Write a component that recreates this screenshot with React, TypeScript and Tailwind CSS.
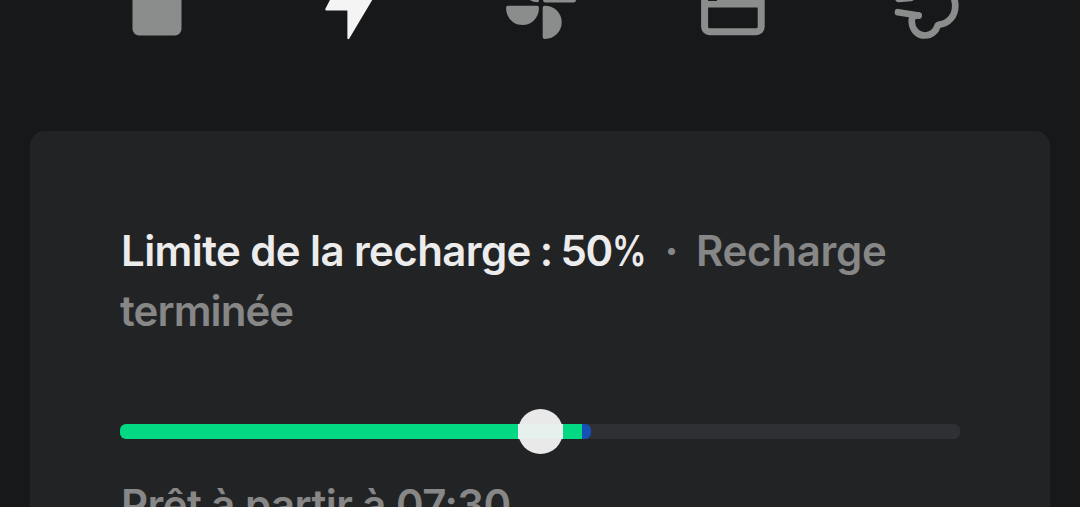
import React from 'react';

const LIMIT = 50;
const CHARGE = 55;

function LockIcon() {
  return <svg width="80" height="50" viewBox="-40 0 80 50" className="text-[#8b8d8c]">
      <rect x="-24.5" y="-12" width="49" height="47.5" rx="6.5" fill="currentColor" />
    </svg>;
}

function BoltIcon() {
  return <svg width="80" height="50" viewBox="-40 0 80 50" className="text-[#f4f4f4]">
      <path d="M-17.5 -3L-23.6 8.8Q-24 10.5 -22.6 10.5H-1.6V38.4Q-1 39.8 0.3 38.6L25 -3Z" fill="currentColor" />
    </svg>;
}

function FanIcon() {
  return <svg width="80" height="50" viewBox="-40 0 80 50" className="text-[#8b8d8c]">
      <g fill="currentColor">
        <path d="M-33 5.7H-4Q-2 5.7 -2 7.7C-2 17.5 -9 25 -18.5 25S-35 17.5 -35 7.7Q-35 5.7 -33 5.7Z" />
        <path d="M1.7 7.7Q1.7 5.7 3.7 5.7C13.5 5.7 20.7 13 20.7 22.3S13.5 39 3.7 39Q1.7 39 1.7 37Z" />
        <path d="M-15 -3Q-10 2.2 -3.5 2.2Q-2 2.2 -2 0V-3Z" />
        <path d="M2 -3V0Q2 2.4 4 2.4H33Q35 2.4 35 0V-3Z" />
      </g>
    </svg>;
}

function TrunkIcon() {
  return <svg width="80" height="50" viewBox="-40 0 80 50" className="text-[#8b8d8c]">
      <rect x="-28.4" y="-18" width="56.6" height="49.8" rx="5" fill="none" stroke="currentColor" strokeWidth="7" />
      <path d="M-28 4.2H28" stroke="currentColor" strokeWidth="6.6" />
      <path d="M-16 -4H28V2H-16Z" fill="currentColor" />
    </svg>;
}

function AirIcon() {
  return <svg width="80" height="50" viewBox="-40 0 80 50" className="text-[#8b8d8c]">
      <g fill="none" stroke="currentColor" strokeWidth="6.7" strokeLinecap="round" strokeLinejoin="round">
        <path d="M-26.5 -1.2L-14 -2.2" />
        <path d="M-27 12.2L-6.5 15.5" />
        <path d="M-6.5 15.5C-12.5 14.5 -13.5 19 -13.2 22C-13 29 -8 35.5 0 35.5C6.5 35.5 11 31 12.3 26.5Q12.8 24.8 14.5 24.6C23.5 23.6 30.3 16 30.3 6C30.3 2 29.5 -1 28 -4" />
      </g>
    </svg>;
}

function ChargeSlider() {
  return <div className="relative mt-[83px] h-[15px] rounded-[6px] bg-[#2f3034]">
      <div className="flex h-full overflow-hidden rounded-[6px]" style={{ width: `${CHARGE + 1.1}%` }}>
        <div className="h-full flex-1 bg-[#03d983]" />
        <div className="h-full w-[9px] bg-[#1450b5]" />
      </div>
      <div className="absolute -top-[15px] -ml-[22px] size-[45px] rounded-full bg-[#e9e9e9]" style={{ left: `${LIMIT}%` }}>
        <div className="mt-[15px] h-[15px] bg-[#e6f0ec]" />
      </div>
    </div>;
}

export default function App() {
  return <div className="flex h-[507px] w-[1080px] flex-col overflow-hidden bg-[#17181a] font-['Inter',sans-serif] text-[42px] leading-[60px] font-[560]">
      <nav className="grid h-[131px] shrink-0 grid-cols-5 justify-items-center pr-[59px] pl-[61px]">
        <LockIcon />
        <BoltIcon />
        <FanIcon />
        <TrunkIcon />
        <AirIcon />
      </nav>
      <main className="mx-[30px] flex-1 rounded-t-[15px] bg-[#222325] px-[90px] pt-[90px]">
        <h1 className="pl-px tracking-[-0.6px] text-[#ececec]">
          <span>Limite de la recharge</span>
          <span className="tracking-[-1.6px]"> : 50</span>
          <span className="inline-block w-[31px] origin-left scale-x-[0.82]">%</span>
          <span className="mr-[18px] ml-[22px] font-bold text-[#868786]">·</span>
          <span className="tracking-[-0.3px] text-[#868786]">Recharge </span>
          <span className="-ml-px tracking-[-0.9px] text-[#868786]">terminée</span>
        </h1>
        <ChargeSlider />
        <p className="mt-[36px] pl-px tracking-[-0.55px] whitespace-nowrap text-[#868786]">Prêt à partir à 07:30</p>
      </main>
    </div>;
}
